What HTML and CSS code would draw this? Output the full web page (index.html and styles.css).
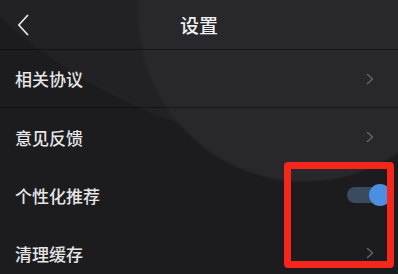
FILE: index.html
```html
<!DOCTYPE html>
<html lang="zh">
<head>
<meta charset="utf-8">
<link rel="stylesheet" href="styles.css">
</head>
<body>
<div class="screen">
  <header class="topbar">
    <svg class="back" width="12" height="22" viewBox="0 0 12 22"><path d="M10.5 1.5 L1.8 11 L10.5 20.5" fill="none" stroke="#e6e6e6" stroke-width="1.8" stroke-linecap="round" stroke-linejoin="round"/></svg>
    <h1 class="title">设置</h1>
    <span class="spacer"></span>
  </header>
  <div class="row lined"><span class="label">相关协议</span><svg class="chev" width="8" height="12" viewBox="0 0 8 12"><path d="M1.5 1.5 L6.5 6 L1.5 10.5" fill="none" stroke="#67676c" stroke-width="1.3" stroke-linecap="round" stroke-linejoin="round"/></svg></div>
  <div class="row"><span class="label">意见反馈</span><svg class="chev" width="8" height="12" viewBox="0 0 8 12"><path d="M1.5 1.5 L6.5 6 L1.5 10.5" fill="none" stroke="#67676c" stroke-width="1.3" stroke-linecap="round" stroke-linejoin="round"/></svg></div>
  <div class="row"><span class="label">个性化推荐</span><div class="toggle"><span class="track"></span><span class="knob"></span></div></div>
  <div class="row"><span class="label">清理缓存</span><svg class="chev" width="8" height="12" viewBox="0 0 8 12"><path d="M1.5 1.5 L6.5 6 L1.5 10.5" fill="none" stroke="#67676c" stroke-width="1.3" stroke-linecap="round" stroke-linejoin="round"/></svg></div>
  <div class="highlight"></div>
</div>
</body>
</html>
```
FILE: styles.css
```css
html, body {
  margin: 0;
  padding: 0;
  background: #1c1c1e;
}
.screen {
  position: relative;
  width: 398px;
  height: 274px;
  overflow: hidden;
  font-family: "Noto Sans CJK SC", "Noto Sans", sans-serif;
  color: #e8e8e8;
  background:
    radial-gradient(circle at 305px 15px, #27272c 0 165px, rgba(39,39,44,0) 168px),
    radial-gradient(circle at 340px -352px, #222226 0 500px, rgba(34,34,38,0) 503px),
    #1c1c1e;
}
.topbar {
  height: 50px;
  display: flex;
  align-items: center;
  padding: 0 17px;
  box-sizing: border-box;
  border-bottom: 1px solid rgba(0,0,0,0.45);
}
.back {
  width: 12px;
  height: 22px;
  flex: none;
}
.spacer {
  width: 12px;
  flex: none;
}
.title {
  flex: 1;
  margin: 0;
  text-align: center;
  font-size: 19px;
  font-weight: 500;
  color: #f0f0f0;
  line-height: 1;
}
.row {
  height: 58px;
  box-sizing: border-box;
  display: flex;
  align-items: center;
  justify-content: space-between;
  padding: 0 24px 0 15px;
}
.row.lined {
  border-bottom: 1px solid rgba(0,0,0,0.4);
}
.label {
  font-size: 17px;
  font-weight: 500;
  color: #e6e6e6;
}
.chev {
  flex: none;
}
.toggle {
  display: flex;
  align-items: center;
  margin-right: -17px;
}
.track {
  width: 33px;
  height: 16px;
  border-radius: 8px;
  background: #3a4a5f;
  margin-right: -11px;
}
.knob {
  width: 22px;
  height: 22px;
  border-radius: 50%;
  background: #4a8fe2;
}
.highlight {
  position: absolute;
  left: 284px;
  top: 162px;
  width: 110px;
  height: 106px;
  box-sizing: border-box;
  border: 7px solid #f5261b;
  border-radius: 4px;
}
```
